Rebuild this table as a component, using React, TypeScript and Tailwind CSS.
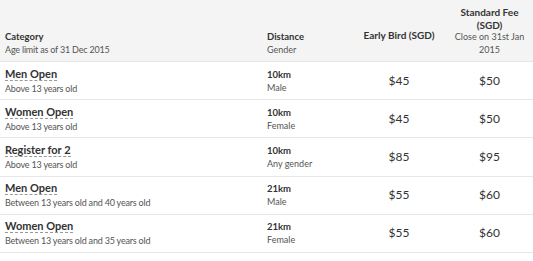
const rows = [
  { name: 'Men Open', age: 'Above 13 years old', dist: '10km', gender: 'Male', early: '$45', std: '$50' },
  { name: 'Women Open', age: 'Above 13 years old', dist: '10km', gender: 'Female', early: '$45', std: '$50' },
  { name: 'Register for 2', age: 'Above 13 years old', dist: '10km', gender: 'Any gender', early: '$85', std: '$95' },
  { name: 'Men Open', age: 'Between 13 years old and 40 years old', dist: '21km', gender: 'Male', early: '$55', std: '$60' },
  { name: 'Women Open', age: 'Between 13 years old and 35 years old', dist: '21km', gender: 'Female', early: '$55', std: '$60' },
]

export default function App() {
  return (
    <div className="w-[533px] h-[261px] bg-white text-[#333] font-['Lato','Liberation_Sans',sans-serif] overflow-hidden">
      {/* header */}
      <div className="grid grid-cols-[262px_90px_94px_87px] h-[61px] bg-[#f4f4f4] items-end pb-[5px] leading-[12.4px]">
        <div className="pl-[5px]">
          <div className="text-[9.5px] font-bold">Category</div>
          <div className="text-[9px] tracking-[-0.2px] text-[#555]">Age limit as of 31 Dec 2015</div>
        </div>
        <div className="pl-[5px]">
          <div className="text-[9.5px] font-bold">Distance</div>
          <div className="text-[9px] text-[#555]">Gender</div>
        </div>
        <div className="text-center self-center pt-[14px]">
          <div className="text-[10px] font-bold">Early Bird (SGD)</div>
        </div>
        <div className="text-center">
          <div className="text-[10px] font-bold">Standard Fee</div>
          <div className="text-[10px] font-bold">(SGD)</div>
          <div className="text-[9px] text-[#555]">Close on 31st Jan</div>
          <div className="text-[9px] text-[#555]">2015</div>
        </div>
      </div>

      {rows.map((r, i) => (
        <div key={i} className="grid grid-cols-[262px_90px_94px_87px] h-[38.2px] border-t border-[#e6e6e6] items-center">
          <div className="pl-[5px]">
            <div className="text-[11px] leading-[14px] font-bold text-[#333]">
              <span className="border-b border-dashed border-[#999]">{r.name}</span>
            </div>
            <div className="text-[9px] leading-[13px] tracking-[-0.2px] text-[#555] mt-[1px]">{r.age}</div>
          </div>
          <div className="pl-[5px]">
            <div className="text-[9.5px] leading-[13px] font-bold">{r.dist}</div>
            <div className="text-[9px] leading-[13px] text-[#555]">{r.gender}</div>
          </div>
          <div className="text-center text-[12px]">{r.early}</div>
          <div className="text-center text-[12px]">{r.std}</div>
        </div>
      ))}
      <div className="border-t border-[#e6e6e6]" />
    </div>
  )
}
